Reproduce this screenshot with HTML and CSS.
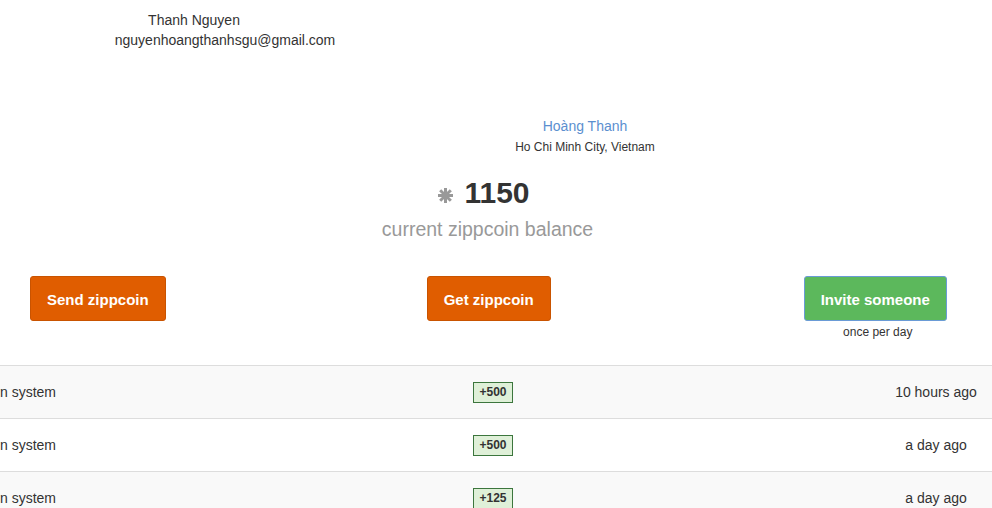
FILE: index.html
```html
<!DOCTYPE html>
<html>
<head>
  <title>Zippcoin</title>
  <meta name="viewport" content="width=device-width, initial-scale=1.0">
  <link rel="stylesheet" href="styles.css">
</head>
<body>

  <header class="account">
    <div class="account-name">Thanh Nguyen</div>
    <div>nguyenhoangthanhsgu@gmail.com</div>
  </header>

  <section class="profile">
    <a class="profile-name" href="#">Hoàng Thanh</a>
    <div class="profile-place">Ho Chi Minh City, Vietnam</div>
  </section>

  <section class="balance">
    <div class="balance-amount">
      <svg class="coin" width="17" height="17" viewBox="0 0 17 17">
        <g stroke="#999" stroke-width="3" stroke-linecap="butt">
          <line x1="8.5" y1="1" x2="8.5" y2="16"/>
          <line x1="1" y1="8.5" x2="16" y2="8.5"/>
          <line x1="3.2" y1="3.2" x2="13.8" y2="13.8"/>
          <line x1="13.8" y1="3.2" x2="3.2" y2="13.8"/>
        </g>
      </svg>
      <span>1150</span>
    </div>
    <div class="balance-label">current zippcoin balance</div>
  </section>

  <section class="actions">
    <button class="btn btn-orange send">Send zippcoin</button>
    <button class="btn btn-orange get">Get zippcoin</button>
    <div class="invite">
      <button class="btn btn-green">Invite someone</button>
      <div class="note">once per day</div>
    </div>
  </section>

  <div class="history">
    <div class="row striped">
      <div class="source"><span>Received from zippcoin system</span></div>
      <div class="amount"><span class="badge">+500</span></div>
      <div class="when">10 hours ago</div>
    </div>
    <div class="row">
      <div class="source"><span>Received from zippcoin system</span></div>
      <div class="amount"><span class="badge">+500</span></div>
      <div class="when">a day ago</div>
    </div>
    <div class="row striped">
      <div class="source"><span>Received from zippcoin system</span></div>
      <div class="amount"><span class="badge">+125</span></div>
      <div class="when">a day ago</div>
    </div>
  </div>

</body>
</html>
```

FILE: styles.css
```css
body { font-family: "Liberation Sans", Arial, sans-serif; font-size: 14px; color: #333; margin: 0; overflow: hidden; }

.account { width: 450px; padding-top: 10px; text-align: center; line-height: 20px; }
.account-name { padding-right: 62px; }

.profile { margin-top: 66px; padding-left: 178px; text-align: center; line-height: 20px; }
.profile-name { color: #5b8fcf; text-decoration: none; }
.profile-place { font-size: 12px; padding-top: 1px; }

.balance { text-align: center; margin-top: 18px; }
.balance-amount { display: flex; justify-content: center; align-items: center; gap: 10px; height: 36px; padding-right: 25px; }
.balance-amount span { font-size: 30px; font-weight: bold; }
.coin { margin-top: 4px; }
.balance-label { font-size: 19.5px; line-height: 36px; color: #999; padding-right: 17px; }

.actions { display: flex; align-items: flex-start; margin-top: 29px; height: 89px; }
.btn {
  font-family: inherit; font-size: 15px; font-weight: bold; color: #fff;
  line-height: 19px; padding: 13px 16px 11px; border: 1px solid; border-radius: 3px;
}
.btn-orange { background: #e05d00; border-color: #c95300; }
.btn-green { background: #5cb85c; border-color: #6a9bd6; }
.send { margin-left: 30px; }
.get { margin-left: 261px; }
.invite { margin-left: 253px; text-align: center; }
.note { font-size: 12px; line-height: 20px; margin-top: 1px; padding-left: 5px; }

.history { border-bottom: 1px solid #ddd; }
.row {
  display: grid; grid-template-columns: 56px 1fr 124px; align-items: center;
  height: 52px; border-top: 1px solid #ddd;
}
.striped { background: #f9f9f9; }
.source { display: flex; justify-content: flex-end; overflow: hidden; white-space: nowrap; }
.amount { padding-left: 62px; text-align: center; }
.badge {
  display: inline-block; font-size: 12px; font-weight: bold; line-height: 17px;
  padding: 1px 5px; background: #dff0d8; border: 1px solid #3c763d;
}
.when { padding-left: 12px; text-align: center; }
```
